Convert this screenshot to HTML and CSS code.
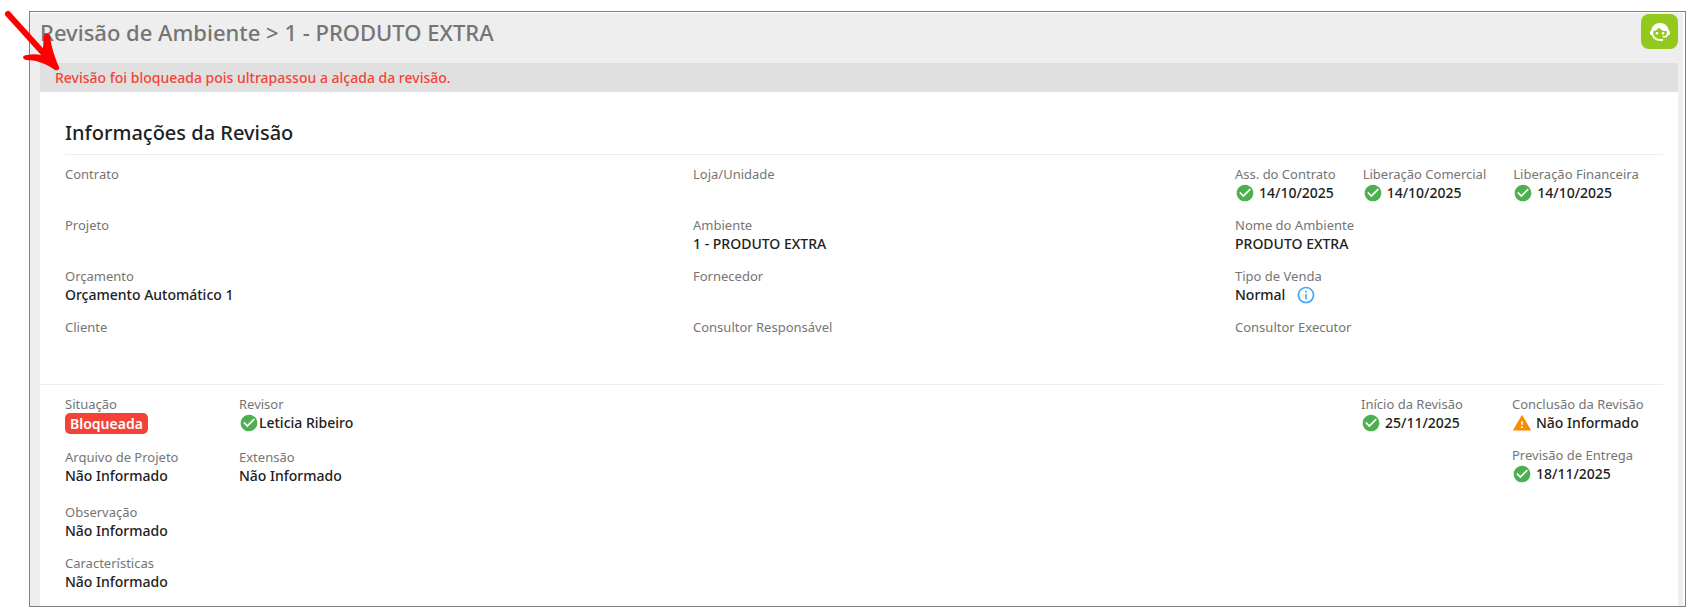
FILE: index.html
```html
<!DOCTYPE html>
<html lang="pt-BR">
<head>
<meta charset="utf-8">
<title>Revisão de Ambiente</title>
<link rel="stylesheet" href="styles.css">
</head>
<body>
<svg class="sprite" aria-hidden="true">
  <symbol id="check" viewBox="0 0 24 24"><path d="M12 2C6.500 2 2 6.500 2 12s4.500 10 10 10 10-4.500 10-10S17.500 2 12 2zm-2 15-5-5 1.400-1.400L10 14.200l7.600-7.600L19 8l-9 9z"/></symbol>
  <symbol id="warning" viewBox="0 0 24 24"><path d="M1 21h22L12 2 1 21zm12-3h-2v-2h2v2zm0-4h-2v-4h2v4z"/></symbol>
  <symbol id="info" viewBox="0 0 24 24"><path d="M11 7h2v2h-2zm0 4h2v6h-2zm1-9C6.480 2 2 6.480 2 12s4.480 10 10 10 10-4.480 10-10S17.520 2 12 2zm0 18c-4.410 0-8-3.590-8-8s3.590-8 8-8 8 3.590 8 8-3.590 8-8 8z"/></symbol>
</svg>
<div class="frame">
  <main class="page">
    <header class="header">
      <h1 class="title">Revisão de Ambiente &gt; 1 - PRODUTO EXTRA</h1>
      <button class="support" type="button" aria-label="Suporte">
        <svg class="support-icon" viewBox="0 0 24 24">
          <path d="M12 3C7 3 3.600 6.500 3.400 10.500C2.500 10.800 2 11.400 2 12.200v1.200c0 .9.700 1.600 1.700 1.700C4.900 18.700 8.100 21 12 21h3v-2h-3c-3.900 0-6.800-2.900-6.800-6.500v-1.300C7.700 10.900 9.700 9.500 10.800 7.500c1.800 2.500 4.700 3.800 8 3.600v1.400c0 1.200-.3 2.300-.8 3.200h-3.200v1.900h3.500c.9-.7 1.500-1.500 2-2.500 1-.1 1.700-.8 1.700-1.700v-1.200c0-.8-.5-1.400-1.400-1.700C20.400 6.500 17 3 12 3z"/>
          <circle cx="9" cy="13.300" r="1.300"/><circle cx="15" cy="13.300" r="1.300"/>
        </svg>
      </button>
    </header>
    <p class="alert" role="alert">Revisão foi bloqueada pois ultrapassou a alçada da revisão.</p>
    <section class="card">
      <h2 class="card-title">Informações da Revisão</h2>
      <dl class="details">
        <div class="field"><dt>Contrato</dt><dd></dd></div>
        <div class="field"><dt>Loja/Unidade</dt><dd></dd></div>
        <div class="approvals">
          <div class="field"><dt>Ass. do Contrato</dt><dd><svg class="icon ok"><use href="#check"/></svg>14/10/2025</dd></div>
          <div class="field"><dt>Liberação Comercial</dt><dd><svg class="icon ok"><use href="#check"/></svg>14/10/2025</dd></div>
          <div class="field"><dt>Liberação Financeira</dt><dd><svg class="icon ok"><use href="#check"/></svg>14/10/2025</dd></div>
        </div>
        <div class="field"><dt>Projeto</dt><dd></dd></div>
        <div class="field"><dt>Ambiente</dt><dd>1 - PRODUTO EXTRA</dd></div>
        <div class="field"><dt>Nome do Ambiente</dt><dd>PRODUTO EXTRA</dd></div>
        <div class="field"><dt>Orçamento</dt><dd>Orçamento Automático 1</dd></div>
        <div class="field"><dt>Fornecedor</dt><dd></dd></div>
        <div class="field"><dt>Tipo de Venda</dt><dd>Normal<svg class="icon info"><use href="#info"/></svg></dd></div>
        <div class="field"><dt>Cliente</dt><dd></dd></div>
        <div class="field"><dt>Consultor Responsável</dt><dd></dd></div>
        <div class="field"><dt>Consultor Executor</dt><dd></dd></div>
      </dl>
      <div class="status">
        <dl class="status-main">
          <div class="field"><dt>Situação</dt><dd><span class="badge">Bloqueada</span></dd></div>
          <div class="field"><dt>Revisor</dt><dd class="tight"><svg class="icon ok"><use href="#check"/></svg>Leticia Ribeiro</dd></div>
          <div class="field file"><dt>Arquivo de Projeto</dt><dd>Não Informado</dd></div>
          <div class="field file"><dt>Extensão</dt><dd>Não Informado</dd></div>
          <div class="field wide"><dt>Observação</dt><dd>Não Informado</dd></div>
          <div class="field wide"><dt>Características</dt><dd>Não Informado</dd></div>
        </dl>
        <dl class="status-dates">
          <div class="field"><dt>Início da Revisão</dt><dd><svg class="icon ok"><use href="#check"/></svg>25/11/2025</dd></div>
          <div class="field"><dt>Conclusão da Revisão</dt><dd><svg class="icon warn"><use href="#warning"/></svg>Não Informado</dd></div>
          <div class="field last"><dt>Previsão de Entrega</dt><dd><svg class="icon ok"><use href="#check"/></svg>18/11/2025</dd></div>
        </dl>
      </div>
    </section>
  </main>
  <svg class="arrow" viewBox="0 0 62 72" aria-hidden="true"><path class="arrow-shaft" d="M8 14L46 56"/><path class="arrow-head" d="M44 35.500C45.500 33 49 33 50 36C51 46 55 58 59 67C60 69 58 71 55 70C45 63 36 60 26 60C22 59 22 55 27 55C32 54 36 54 41 55C44 49 43 42 44 35.500Z"/></svg>
</div>
</body>
</html>
```
FILE: styles.css
```css
* { box-sizing: border-box; }
body {
  margin: 0;
  background: #fff;
  color: #212121;
  font-family: "Noto Sans", "Open Sans", sans-serif;
  font-size: 14px;
  line-height: 19px;
}
h1, h2, p, dl, dd { margin: 0; }
.sprite { display: block; width: 0; height: 0; }
.frame {
  position: relative;
  margin: 11px 3px 7px 29px;
  padding: 1px 2px 0 0;
  border: 1px solid #808080;
}
.page { padding: 0 5px 0 10px; background: #eee; }
.header {
  display: flex;
  justify-content: space-between;
  align-items: flex-start;
  height: 50px;
  padding-top: 1px;
}
.title {
  color: #757575;
  font-size: 22px;
  font-weight: 500;
  line-height: 36px;
}
.support {
  width: 37px;
  height: 35px;
  padding: 0;
  border: 0;
  border-radius: 8px;
  background: #93c81f;
  fill: #fff;
}
.support-icon { display: block; width: 24px; height: 24px; margin: auto; }
.alert {
  padding: 5px 15px;
  background: #e0e0e0;
  color: #f44336;
  font-weight: 500;
}
.card { padding: 25px 15px 15px 0; background: #fff; }
.card-title {
  margin-left: 25px;
  padding-bottom: 5px;
  border-bottom: 1px solid #eee;
  font-size: 20px;
  font-weight: 500;
  line-height: 32px;
}
.details {
  display: grid;
  grid-template-columns: 628fr 542fr 428fr;
  row-gap: 14px;
  padding: 10px 0 29px 25px;
}
.approvals { display: flex; gap: 27px; }
.field dt {
  color: #757575;
  font-size: 13px;
  line-height: 18px;
  white-space: nowrap;
}
.field dd {
  display: flex;
  align-items: center;
  gap: 4px;
  min-height: 19px;
  font-weight: 500;
  white-space: nowrap;
}
.icon { width: 20px; height: 20px; margin: -1px 0; flex: none; }
.ok { fill: #4caf50; }
.warn { fill: #fb8c00; }
.info { margin-left: 7px; fill: #42a5f5; }
.field .tight { gap: 0; }
.status {
  display: flex;
  justify-content: space-between;
  padding: 10px 0 0 25px;
  border-top: 1px solid #eee;
}
.status-main {
  display: grid;
  grid-template-columns: 174px auto;
  row-gap: 14px;
}
.status-dates {
  display: grid;
  grid-template-columns: 151px 151px;
  row-gap: 14px;
  align-content: start;
}
.file { padding-bottom: 4px; }
.wide { grid-column: 1 / -1; }
.last { grid-column: 2; }
.badge {
  padding: 0 5px;
  border-radius: 5px;
  background: #f44336;
  color: #fff;
  font-weight: 600;
  line-height: 21px;
}
.arrow {
  position: absolute;
  top: -12px;
  left: -30px;
  width: 62px;
  height: 72px;
}
.arrow-shaft { fill: none; stroke: #f00; stroke-width: 6; stroke-linecap: round; }
.arrow-head { fill: #f00; }
```
